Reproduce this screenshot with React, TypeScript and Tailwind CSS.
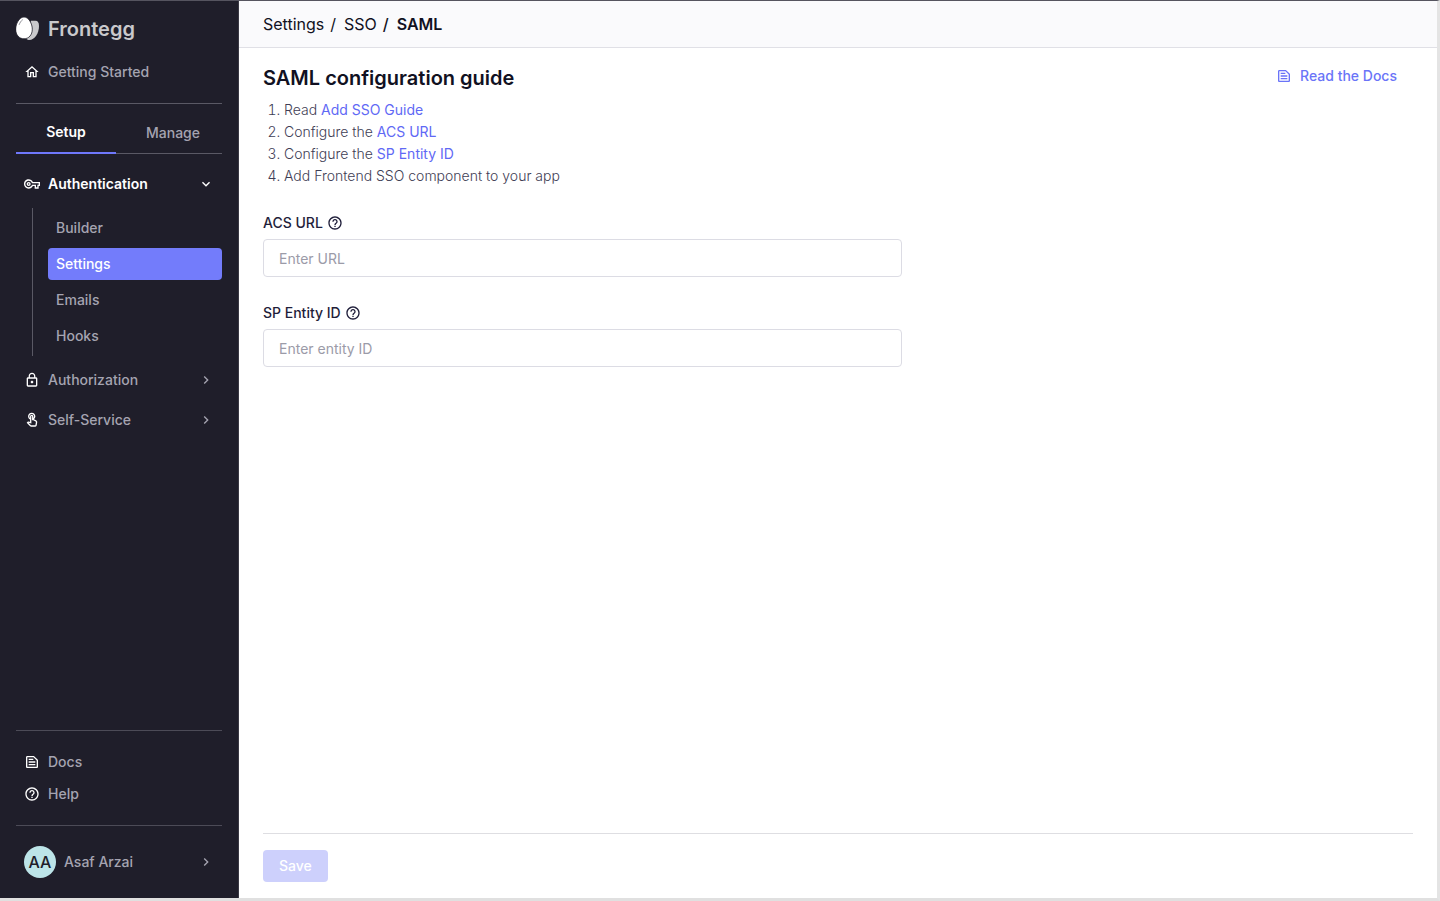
import { useState } from 'react';
import type { ReactNode } from 'react';
import {
  MdChevronRight,
  MdExpandMore,
  MdHelpOutline,
  MdOutlineHome,
  MdLockOutline,
  MdOutlineTextSnippet,
  MdOutlineTouchApp,
  MdOutlineVpnKey,
} from 'react-icons/md';

const authLinks = ['Builder', 'Settings', 'Emails', 'Hooks'];

function Logo() {
  return (
    <svg viewBox="0 0 24 24" className="size-6 shrink-0" aria-hidden="true">
      <path d="M15 3.800h4.500c2.400 0 3.500 2 3.500 5.200 0 7.500-4.400 14-9.700 14-1.500 0-2.700-.6-3.300-1.500z" fill="#c9c9cc" />
      <path
        d="M8 0c4.600 0 8.300 6.600 8.300 12.200 0 5.600-3.400 9.600-8.300 9.600s-8.300-4-8.300-9.600C-.3 6.600 3.400 0 8 0z"
        fill="#fff"
        stroke="#1f1e2a"
        strokeWidth="0.800"
      />
      <path d="M3.200 7.500C4 5.500 5 4 6.500 2.800" fill="none" stroke="#77777f" strokeWidth="0.800" strokeLinecap="round" />
    </svg>
  );
}

function NavButton({ icon, label }: { icon: ReactNode; label: string }) {
  return (
    <button className="flex h-10 w-full items-center gap-2 px-2 text-left">
      <span className="flex w-4 shrink-0 justify-center text-white">{icon}</span>
      <span className="flex-1">{label}</span>
      <MdChevronRight className="size-4" />
    </button>
  );
}

function NavLink({ icon, label }: { icon: ReactNode; label: string }) {
  return (
    <a href="#" className="flex h-8 items-center gap-2 px-2">
      <span className="text-white">{icon}</span>
      {label}
    </a>
  );
}

type FieldProps = { id: string; label: string; placeholder: string };

function Field({ id, label, placeholder }: FieldProps) {
  const [value, setValue] = useState('');

  return (
    <div>
      <div className="flex h-5 items-center gap-1 text-[#1f1e3a]">
        <label htmlFor={id} className="text-sm font-medium">
          {label}
        </label>
        <MdHelpOutline className="size-4" />
      </div>
      <input
        id={id}
        type="text"
        value={value}
        onChange={(e) => setValue(e.target.value)}
        placeholder={placeholder}
        className="mt-1.5 h-[38px] w-full rounded border border-[#dcdce4] bg-white px-[15px] text-sm placeholder:text-[#9b9ba8]"
      />
    </div>
  );
}

function Sidebar() {
  return (
    <aside className="flex w-[239px] shrink-0 flex-col border-r border-[#3a3944] bg-[#1f1e2a] px-4 text-sm font-medium text-[#a5a4b1]">
      <div className="flex h-[55px] items-center gap-2 text-xl font-semibold text-[#c9c9cc]">
        <Logo />
        Frontegg
      </div>
      <NavLink icon={<MdOutlineHome className="size-4" />} label="Getting Started" />

      <div className="mt-[15px] flex border-t border-[#5a5965] pt-2">
        <button className="h-[42px] w-[100px] border-b-2 border-[#6f78fb] font-semibold text-white">Setup</button>
        <button className="h-[42px] flex-1 border-b border-[#5a5965] pl-2">Manage</button>
      </div>

      <nav className="mt-2.5">
        <button className="flex h-10 w-full items-center gap-2 px-2 text-left text-white">
          <MdOutlineVpnKey className="size-4 shrink-0" />
          <span className="flex-1 font-semibold">Authentication</span>
          <MdExpandMore className="size-4" />
        </button>
        <ul className="my-1 ml-4 flex flex-col gap-1 border-l border-[#5a5965] py-1 pl-[15px]">
          {authLinks.map((link) => (
            <li key={link}>
              <a
                href="#"
                className={
                  link === 'Settings'
                    ? 'flex h-8 items-center rounded bg-[#737cfb] px-2 text-white'
                    : 'flex h-8 items-center px-2'
                }
              >
                {link}
              </a>
            </li>
          ))}
        </ul>
        <NavButton icon={<MdLockOutline className="size-4" />} label="Authorization" />
        <NavButton icon={<MdOutlineTouchApp className="size-4" />} label="Self-Service" />
      </nav>

      <div className="mt-auto border-y border-[#4c4b57] py-[15px]">
        <NavLink icon={<MdOutlineTextSnippet className="size-4" />} label="Docs" />
        <NavLink icon={<MdHelpOutline className="size-4" />} label="Help" />
      </div>
      <button className="my-4 flex h-10 items-center gap-2 px-2 text-left">
        <span className="flex size-8 items-center justify-center rounded-full bg-[#bce4e8] text-base text-[#1f1e2a]">
          AA
        </span>
        <span className="flex-1">Asaf Arzai</span>
        <MdChevronRight className="size-4" />
      </button>
    </aside>
  );
}

export default function App() {
  return (
    <div className="flex min-h-screen border-t border-r-3 border-b-3 border-t-[#55545f] border-r-[#e4e4e4] border-b-[#e0e0e0] bg-white font-['Inter',sans-serif]">
      <Sidebar />
      <div className="flex flex-1 flex-col">
        <header className="flex h-[47px] items-center border-b border-[#e0e0e6] bg-[#fafafc] px-6 text-base text-[#111122]">
          <nav aria-label="Breadcrumb" className="flex gap-2">
            <span className="flex gap-1.5">
              <a href="#">Settings</a>
              <span>/</span>
            </span>
            <span className="flex gap-1.5">
              <a href="#">SSO</a>
              <span className="font-medium">/</span>
            </span>
            <span className="font-semibold">SAML</span>
          </nav>
        </header>

        <main className="flex flex-1 flex-col px-6">
          <div className="flex items-start justify-between pt-4 pr-4">
            <h1 className="text-xl font-semibold text-[#111122]">SAML configuration guide</h1>
            <a href="#" className="flex h-6 items-center gap-2 text-sm font-medium text-[#6a74f8]">
              <MdOutlineTextSnippet className="size-4" />
              Read the Docs
            </a>
          </div>

          <ol className="mt-[7px] list-decimal pl-[21px] text-sm/[22px] font-light text-[#3f3e55]">
            <li>
              Read <a href="#" className="font-normal text-[#5f69f5]">Add SSO Guide</a>
            </li>
            <li>
              Configure the <a href="#" className="font-normal text-[#5f69f5]">ACS URL</a>
            </li>
            <li>
              Configure the <a href="#" className="font-normal text-[#5f69f5]">SP Entity ID</a>
            </li>
            <li>Add Frontend SSO component to your app</li>
          </ol>

          <form className="mt-[26px] flex w-5/9 flex-col gap-[26px]">
            <Field id="acs-url" label="ACS URL" placeholder="Enter URL" />
            <Field id="sp-entity-id" label="SP Entity ID" placeholder="Enter entity ID" />
          </form>

          <footer className="mt-auto border-t border-[#dedee2] py-4">
            <button disabled className="h-8 rounded bg-[#cdd0fc] px-4 text-sm font-medium text-white">
              Save
            </button>
          </footer>
        </main>
      </div>
    </div>
  );
}
